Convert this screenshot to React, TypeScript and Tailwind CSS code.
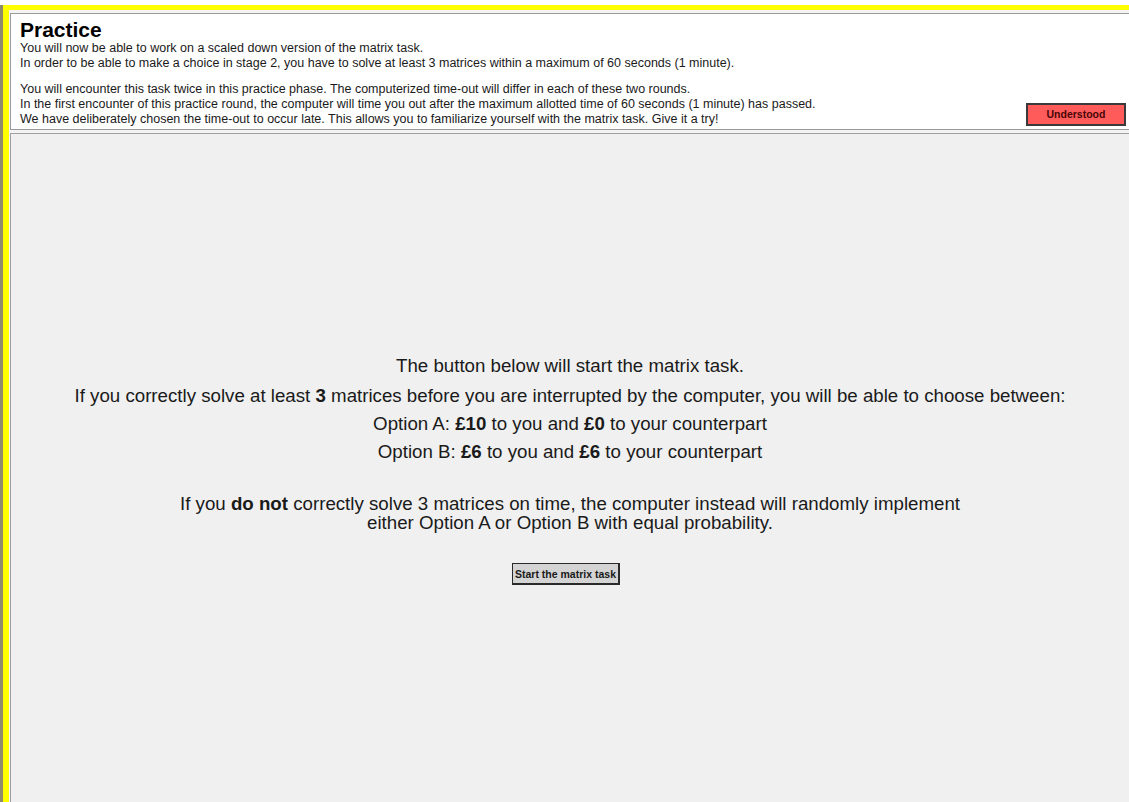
import React from "react";

const font = { fontFamily: '"Liberation Sans", Arial, sans-serif' };

function Header() {
  return (
    <div className="flex border-t border-l border-b border-[#9a9a9a] bg-white pl-[9px] pr-[3px] pb-[2px]">
      <div className="flex-1 text-[12.5px] leading-[15px] text-[#1a1a1a]">
        <h1 className="text-[21px] font-bold leading-[22px] text-black pt-[5px]">Practice</h1>
        <p>You will now be able to work on a scaled down version of the matrix task.</p>
        <p>In order to be able to make a choice in stage 2, you have to solve at least 3 matrices within a maximum of 60 seconds (1 minute).</p>
        <div className="h-[11px]" />
        <p>You will encounter this task twice in this practice phase. The computerized time-out will differ in each of these two rounds.</p>
        <p>In the first encounter of this practice round, the computer will time you out after the maximum allotted time of 60 seconds (1 minute) has passed.</p>
        <p>We have deliberately chosen the time-out to occur late. This allows you to familiarize yourself with the matrix task. Give it a try!</p>
      </div>
      <button className="self-end mb-px w-[100px] h-[23px] bg-[#ff5b5b] border-2 border-[#3a3a3a] text-[10.5px] font-bold text-[#4a0606]">
        Understood
      </button>
    </div>
  );
}

function Instructions() {
  return (
    <div className="flex-1 mt-[3px] border-t border-l border-[#a0a0a0] bg-[#f0f0f0] text-center text-[18.7px] leading-[20px] text-[#1a1a1a]">
      <div className="pt-[222px]">
        <p className="mb-[10px]">The button below will start the matrix task.</p>
        <p className="mb-[8px]">
          If you correctly solve at least <b>3</b> matrices before you are interrupted by the computer, you will be able to choose between:
        </p>
        <p className="mb-[8px]">
          Option A: <b>£10</b> to you and <b>£0</b> to your counterpart
        </p>
        <p className="mb-[32px]">
          Option B: <b>£6</b> to you and <b>£6</b> to your counterpart
        </p>
        <p className="leading-[19px]">
          If you <b>do not</b> correctly solve 3 matrices on time, the computer instead will randomly implement
          <br />
          either Option A or Option B with equal probability.
        </p>
        <button className="mt-[31px] mr-[8px] w-[108px] h-[22px] bg-[#d4d4d4] border border-[#2a2a2a] border-r-2 border-b-2 text-[10.5px] leading-[18px] font-bold text-[#1a1a1a]">
          Start the matrix task
        </button>
      </div>
    </div>
  );
}

export default function App() {
  return (
    <div style={font} className="h-[802px] overflow-hidden bg-white pt-[5px] flex flex-col">
      <div className="flex-1 flex flex-col border-l-[3px] border-[#8e8a6c] bg-[#ffff00] pl-[6px] pt-[5px]">
        <div className="flex-1 flex flex-col bg-[#f4f4f4] pl-px pt-[3px]">
          <Header />
          <Instructions />
        </div>
      </div>
    </div>
  );
}
